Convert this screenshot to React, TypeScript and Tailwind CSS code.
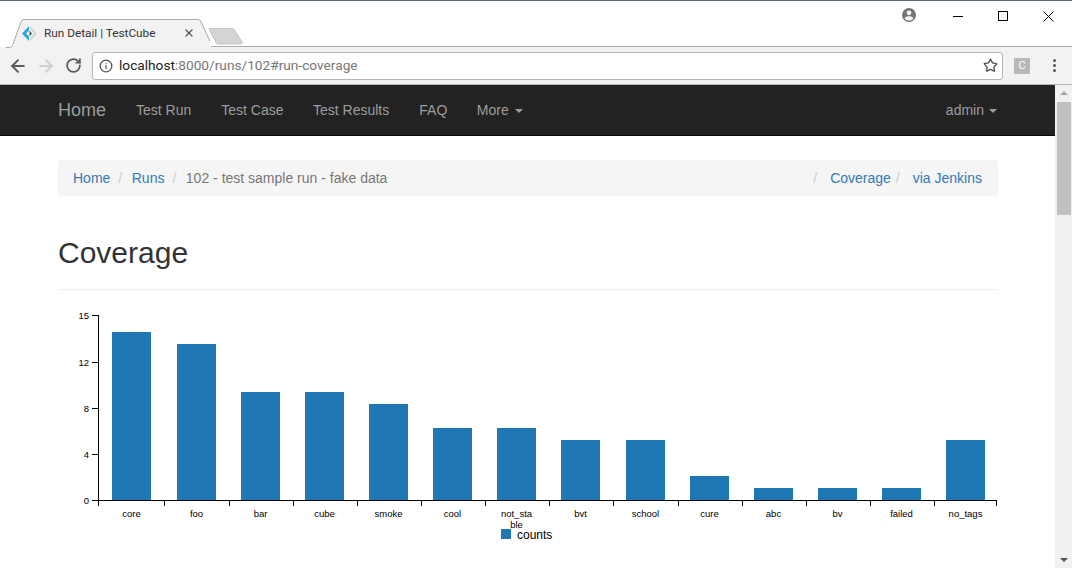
import { ArrowLeft, ArrowRight, RotateCw, Info, Star, X } from "lucide-react";

const bars = [
  { name: "core", x: 112, top: 332 },
  { name: "foo", x: 177, top: 344 },
  { name: "bar", x: 241, top: 392 },
  { name: "cube", x: 305, top: 392 },
  { name: "smoke", x: 369, top: 404 },
  { name: "cool", x: 433, top: 428 },
  { name: "not_sta", x: 497, top: 428 },
  { name: "bvt", x: 561, top: 440 },
  { name: "school", x: 626, top: 440 },
  { name: "cure", x: 690, top: 476 },
  { name: "abc", x: 754, top: 488 },
  { name: "bv", x: 818, top: 488 },
  { name: "failed", x: 882, top: 488 },
  { name: "no_tags", x: 946, top: 440 },
];

const xTicks = [98, 164, 229, 293, 357, 421, 485, 549, 613, 678, 742, 806, 870, 934, 996];

const yTicks = [
  { label: "15", y: 315 },
  { label: "12", y: 362 },
  { label: "8", y: 408 },
  { label: "4", y: 454 },
  { label: "0", y: 500 },
];

function Chart() {
  // svg origin sits at page y=305, x=58
  return (
    <svg width="956" height="240" viewBox="58 305 956 240" className="block" fontFamily="'Liberation Sans', sans-serif">
      {bars.map((b) => (
        <rect key={b.name} x={b.x} y={b.top} width="39" height={500 - b.top} fill="#1f77b4" />
      ))}
      <path d="M98.5 315V500.5" stroke="#000" fill="none" />
      {yTicks.map((t) => (
        <g key={t.label}>
          <line x1="92" x2="98" y1={t.y + 0.5} y2={t.y + 0.5} stroke="#000" />
          <text x="89" y={t.y + 3.5} fontSize="9.5" textAnchor="end" fill="#000">
            {t.label}
          </text>
        </g>
      ))}
      <line x1="98" x2="997" y1="500.5" y2="500.5" stroke="#000" />
      {xTicks.map((x) => (
        <line key={x} x1={x + 0.5} x2={x + 0.5} y1="500" y2="506" stroke="#000" />
      ))}
      {bars.map((b) => (
        <text key={b.name} x={b.x + 19.5} y="517" fontSize="9.5" textAnchor="middle" fill="#000">
          {b.name}
        </text>
      ))}
      <text x="516.5" y="528" fontSize="9.5" textAnchor="middle" fill="#000">
        ble
      </text>
      <rect x="501" y="529" width="10" height="10" fill="#1f77b4" />
      <text x="517" y="539" fontSize="12" fill="#000">
        counts
      </text>
    </svg>
  );
}

function BrowserChrome() {
  return (
    <div className="font-['Roboto',sans-serif]">
      <div className="h-px bg-[#5f6b78]" />
      <div className="relative flex h-[46px] items-end bg-white">
        <div className="relative ml-[6px] flex h-[28px] w-[204px] items-center">
          <svg width="204" height="29" viewBox="0 0 204 29" className="absolute left-0 top-0">
            <path d="M0 28.500H3C5 28.500 6 27.500 7 25L15 3C15.500 1.500 16.500 .5 18 .5H192C193.500 .5 194 1 195 3L207 28.500" fill="#f2f2f2" stroke="#a9a9a9" />
          </svg>
          <svg width="17" height="17" viewBox="0 0 17 17" className="relative ml-[15px] mt-[1px]">
            <path d="M8 1L1 8.500 8 16V11.500L5 8.500 8 5.500z" fill="#29a7df" />
            <path d="M8.500 5.500L11 8.500 8.500 11.500z" fill="#4a5a68" />
            <path d="M9.500 1L16 8.500 9.500 16l-.8-2.500L13 8.500 8.700 3.500z" fill="#d6d6d6" />
          </svg>
          <span className="relative ml-[6px] mt-[1px] text-[11.8px] leading-none text-[#333]">Run Detail | TestCube</span>
          <X className="absolute left-[177px] top-[8px] h-[12px] w-[12px] text-[#555]" strokeWidth={2.6} />
        </div>
        <svg width="36" height="18" viewBox="0 0 36 18" className="mb-[2px] -ml-[1px]">
          <path d="M1 1.500H23C24 1.500 25 2 25.500 3L33 15C33.500 16 33 17 32 17H9C8 17 7.500 16.500 7 15.500L.5 3C0 2 0 1.500 1 1.500z" fill="#d4d4d4" stroke="#c4c4c4" />
        </svg>
        <div className="absolute bottom-0 left-[211px] right-0 h-px bg-[#a9a9a9]" />
        <div className="absolute right-0 top-0 flex h-[30px] items-center">
          <svg width="16" height="16" viewBox="0 0 16 16" className="mr-[36px] mt-[-2px]">
            <circle cx="8" cy="8" r="7" fill="#757575" />
            <circle cx="8" cy="5.800" r="2.400" fill="#f2f2f2" />
            <path d="M3.600 11.400C4.500 9.800 6 9.300 8 9.300s3.500.5 4.400 2.100C11.300 12.800 9.800 13.400 8 13.400s-3.300-.6-4.400-2z" fill="#f2f2f2" />
          </svg>
          <svg width="10" height="10" viewBox="0 0 10 10" className="mr-[35px]">
            <path d="M0 5.500H10" stroke="#000" />
          </svg>
          <svg width="10" height="10" viewBox="0 0 10 10" className="mr-[35px]">
            <rect x=".5" y=".5" width="9" height="9" fill="none" stroke="#000" />
          </svg>
          <svg width="11" height="11" viewBox="0 0 11 11" className="mr-[18px]">
            <path d="M.5 .5L10.500 10.500M10.500 .5L.5 10.500" stroke="#000" />
          </svg>
        </div>
      </div>
      <div className="flex h-[37px] items-center bg-[#f2f2f2]">
        <ArrowLeft className="ml-[8px] h-[20px] w-[20px] text-[#5a5a5a]" strokeWidth={2.3} />
        <ArrowRight className="ml-[8px] h-[20px] w-[20px] text-[#cfcfcf]" strokeWidth={2.3} />
        <RotateCw className="ml-[9px] h-[17px] w-[17px] text-[#5a5a5a]" strokeWidth={2.5} />
        <div className="ml-[10px] flex h-[28px] w-[911px] items-center rounded-[3px] border border-[#b5b5b5] bg-white">
          <Info className="ml-[6px] h-[14px] w-[14px] text-[#555]" strokeWidth={2.2} />
          <span className="ml-[6px] text-[13.7px] leading-none text-[#777]">
            <span className="text-[#222]">localhost</span>:8000/runs/102#run-coverage
          </span>
          <Star className="ml-auto mr-[4px] h-[15px] w-[15px] text-[#555]" strokeWidth={2.2} />
        </div>
        <div className="ml-[11px] flex h-[16px] w-[16px] items-center justify-center rounded-[1px] bg-[#b8b8b8] text-[11px] leading-none text-white">
          C
        </div>
        <div className="ml-[23px] flex flex-col gap-[2px]">
          <div className="h-[3px] w-[3px] rounded-full bg-[#555]" />
          <div className="h-[3px] w-[3px] rounded-full bg-[#555]" />
          <div className="h-[3px] w-[3px] rounded-full bg-[#555]" />
        </div>
      </div>
      <div className="h-px bg-[#b5b5b5]" />
    </div>
  );
}

function Navbar() {
  return (
    <nav className="flex h-[51px] items-center border-b border-[#080808] bg-[#222] pl-[58px] pr-[58px] text-[14px] text-[#9d9d9d]">
      <span className="text-[18px]">Home</span>
      <span className="ml-[30px]">Test Run</span>
      <span className="ml-[30px]">Test Case</span>
      <span className="ml-[29.5px]">Test Results</span>
      <span className="ml-[30px]">FAQ</span>
      <span className="ml-[29.5px] flex items-center">
        More
        <span className="ml-[6px] mt-[2px] border-x-[4px] border-t-[4px] border-x-transparent border-t-[#9d9d9d]" />
      </span>
      <span className="ml-auto flex items-center">
        admin
        <span className="ml-[5px] mt-[2px] border-x-[4px] border-t-[4px] border-x-transparent border-t-[#9d9d9d]" />
      </span>
    </nav>
  );
}

function Scrollbar() {
  return (
    <div className="flex w-[17px] shrink-0 flex-col items-center bg-[#f1f1f1]">
      <div className="mt-[6px] border-x-[4px] border-b-[4px] border-x-transparent border-b-[#a3a3a3]" />
      <div className="mt-[7px] h-[113px] w-[14px] bg-[#c1c1c1]" />
      <div className="mb-[6px] mt-auto border-x-[4px] border-t-[4px] border-x-transparent border-t-[#505050]" />
    </div>
  );
}

export default function App() {
  return (
    <div className="flex h-[568px] w-[1072px] flex-col overflow-hidden bg-white">
      <BrowserChrome />
      <div className="flex min-h-0 flex-1">
        <div className="min-w-0 flex-1 font-['Liberation_Sans',sans-serif]">
          <Navbar />
          <div className="pl-[58px] pr-[57px] pt-[24px] text-[14px] text-[#333]">
            <div className="flex h-[36px] items-center rounded-[4px] bg-[#f5f5f5] pl-[15px] pr-[16px]">
              <span className="text-[#337ab7]">Home</span>
              <span className="px-[8px] text-[#ccc]">/</span>
              <span className="ml-[1.5px] text-[#337ab7]">Runs</span>
              <span className="px-[8px] text-[#ccc]">/</span>
              <span className="ml-[1.5px] text-[#777]">102 - test sample run - fake data</span>
              <span className="ml-auto text-[#ccc]">/</span>
              <span className="ml-[13px] text-[#337ab7]">Coverage</span>
              <span className="ml-[5px] text-[#ccc]">/</span>
              <span className="ml-[13px] text-[#337ab7]">via Jenkins</span>
            </div>
            <h1 className="mt-[37px] text-[30px] leading-[40px] text-[#333]">Coverage</h1>
            <div className="mt-[16px] h-px bg-[#eee]" />
            <div className="-mr-[16px] mt-[15px]">
              <Chart />
            </div>
          </div>
        </div>
        <Scrollbar />
      </div>
    </div>
  );
}
